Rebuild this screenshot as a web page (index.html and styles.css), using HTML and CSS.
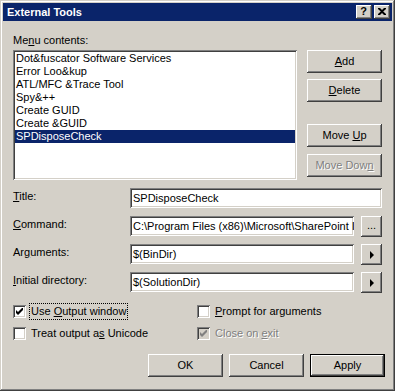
FILE: index.html
```html
<!DOCTYPE html>
<html>
<head>
<meta charset="utf-8">
<link rel="stylesheet" href="styles.css">
</head>
<body>
<div class="window">
  <div class="titlebar">
    <span class="title">External Tools</span>
    <div class="tb-buttons">
      <span class="tb-btn help">?</span>
      <span class="tb-btn close"><svg width="8" height="7" viewBox="0 0 8 7"><path d="M0 0h2l2 2 2-2h2v1L5.2 3.5 8 6v1H6L4 5 2 7H0V6l2.8-2.5L0 1z" fill="#000"/></svg></span>
    </div>
  </div>
  <div class="client">
    <div class="menu-label">Me<u>n</u>u contents:</div>
    <div class="top-row">
      <div class="listbox">
        <div class="item">Dot&amp;fuscator Software Services</div>
        <div class="item">Error Loo&amp;kup</div>
        <div class="item">ATL/MFC &amp;Trace Tool</div>
        <div class="item">Spy&amp;++</div>
        <div class="item">Create GUID</div>
        <div class="item">Create &amp;GUID</div>
        <div class="item selected">SPDisposeCheck</div>
      </div>
      <div class="side-buttons">
        <button class="btn"><span><u>A</u>dd</span></button>
        <button class="btn"><span><u>D</u>elete</span></button>
        <button class="btn move-up"><span>Move <u>U</u>p</span></button>
        <button class="btn disabled"><span>Move Dow<u>n</u></span></button>
      </div>
    </div>
    <div class="fields">
      <div class="flabel"><u>T</u>itle:</div>
      <div class="edit span2"><span>SPDisposeCheck</span></div>
      <div class="flabel"><u>C</u>ommand:</div>
      <div class="edit"><span>C:\Program Files (x86)\Microsoft\SharePoint I</span></div>
      <button class="btn small dots"><span>...</span></button>
      <div class="flabel">Ar<u>g</u>uments:</div>
      <div class="edit"><span>$(BinDir)</span></div>
      <button class="btn small"><span class="arrow"></span></button>
      <div class="flabel"><u>I</u>nitial directory:</div>
      <div class="edit"><span>$(SolutionDir)</span></div>
      <button class="btn small"><span class="arrow"></span></button>
    </div>
    <div class="checks">
      <div class="check">
        <span class="cb"><svg width="7" height="7" viewBox="0 0 7 7"><path d="M0 2L2 4 6 0H7V2L2 7 0 5Z" fill="#000"/></svg></span>
        <span class="clabel focus">Use <u>O</u>utput window</span>
      </div>
      <div class="check">
        <span class="cb"></span>
        <span class="clabel"><u>P</u>rompt for arguments</span>
      </div>
      <div class="check">
        <span class="cb"></span>
        <span class="clabel">Treat output a<u>s</u> Unicode</span>
      </div>
      <div class="check disabled">
        <span class="cb"><svg width="7" height="7" viewBox="0 0 7 7"><path d="M0 2L2 4 6 0H7V2L2 7 0 5Z" fill="#808080"/></svg></span>
        <span class="clabel">Close on <u>e</u>xit</span>
      </div>
    </div>
    <div class="bottom-buttons">
      <button class="btn"><span>OK</span></button>
      <button class="btn"><span>Cancel</span></button>
      <button class="btn default"><span>Apply</span></button>
    </div>
  </div>
</div>
</body>
</html>
```

FILE: styles.css
```css
html, body {
  margin: 0;
  padding: 0;
  background: #d4d0c8;
}
body {
  font-family: "Liberation Sans", Arial, sans-serif;
  font-size: 11px;
  color: #000;
}
.window {
  width: 395px;
  height: 391px;
  box-sizing: border-box;
  background: #d4d0c8;
  padding: 3px;
  box-shadow: inset -1px -1px #404040, inset 1px 1px #d4d0c8, inset -2px -2px #808080, inset 2px 2px #fff;
  display: flex;
  flex-direction: column;
}
.titlebar {
  height: 18px;
  background: #0a246a;
  color: #fff;
  display: flex;
  align-items: center;
  justify-content: space-between;
  padding: 0 2px;
}
.title {
  font-weight: bold;
  padding-left: 2px;
  line-height: 13px;
}
.tb-buttons {
  display: flex;
  gap: 2px;
}
.tb-btn {
  width: 16px;
  height: 14px;
  box-sizing: border-box;
  background: #d4d0c8;
  color: #000;
  box-shadow: inset -1px -1px #404040, inset 1px 1px #fff, inset -2px -2px #808080, inset 2px 2px #d4d0c8;
  display: flex;
  align-items: center;
  justify-content: center;
  font-weight: bold;
  font-size: 11px;
  line-height: 11px;
}
.tb-btn.help {
  padding: 0 1px 1px 0;
}
.tb-btn.close svg {
  margin: 0 1px 1px 0;
}
.client {
  flex: 1;
  padding: 0 10px 0 10px;
  display: flex;
  flex-direction: column;
}
.menu-label {
  margin-top: 13px;
  line-height: 13px;
}
.top-row {
  margin-top: 3px;
  display: flex;
  gap: 10px;
}
.listbox {
  width: 284px;
  height: 130px;
  box-sizing: border-box;
  background: #fff;
  padding: 2px;
  box-shadow: inset 1px 1px #808080, inset -1px -1px #fff, inset 2px 2px #404040, inset -2px -2px #d4d0c8;
}
.item {
  height: 13px;
  line-height: 13px;
  padding-left: 1px;
  white-space: nowrap;
}
.item.selected {
  background: #0a246a;
  color: #fff;
}
.side-buttons {
  display: flex;
  flex-direction: column;
  width: 75px;
}
.btn {
  border: none;
  margin: 0;
  padding: 0;
  font: inherit;
  color: #000;
  background: #d4d0c8;
  width: 75px;
  height: 23px;
  box-sizing: border-box;
  box-shadow: inset -1px -1px #404040, inset 1px 1px #fff, inset -2px -2px #808080, inset 2px 2px #d4d0c8;
  display: flex;
  align-items: center;
  justify-content: center;
  line-height: 13px;
  white-space: nowrap;
}
.side-buttons .btn + .btn {
  margin-top: 6px;
}
.side-buttons .btn.move-up {
  margin-top: 22px;
}
.side-buttons .btn.disabled {
  margin-top: 7px;
}
.btn.disabled, .check.disabled .clabel {
  color: #808080;
  text-shadow: 1px 1px #fff;
}
.btn.default {
  box-shadow: inset 0 0 0 1px #000, inset -2px -2px #404040, inset 2px 2px #fff, inset -3px -3px #808080, inset 3px 3px #d4d0c8;
}
.fields {
  margin-top: 8px;
  display: grid;
  grid-template-columns: 110px 1fr 21px;
  grid-auto-rows: 20px;
  column-gap: 7px;
  row-gap: 8px;
}
.flabel {
  padding-top: 2px;
  line-height: 13px;
  white-space: nowrap;
}
.edit {
  background: #fff;
  box-sizing: border-box;
  height: 20px;
  padding: 0 3px;
  box-shadow: inset 1px 1px #808080, inset -1px -1px #fff, inset 2px 2px #404040, inset -2px -2px #d4d0c8;
  display: flex;
  align-items: center;
  white-space: nowrap;
  overflow: hidden;
  line-height: 13px;
}
.edit.span2 {
  grid-column: 2 / 4;
}
.btn.small {
  width: 21px;
  height: 21px;
}
.btn.dots {
  align-items: flex-end;
  padding-bottom: 5px;
}
.arrow {
  width: 0;
  height: 0;
  border-left: 4px solid #000;
  border-top: 4px solid transparent;
  border-bottom: 4px solid transparent;
  margin-left: 1px;
}
.checks {
  margin-top: 13px;
  display: grid;
  grid-template-columns: 184px 1fr;
  row-gap: 9px;
}
.check {
  display: flex;
  align-items: center;
  gap: 5px;
  height: 13px;
}
.cb {
  width: 13px;
  height: 13px;
  flex: none;
  box-sizing: border-box;
  background: #fff;
  box-shadow: inset 1px 1px #808080, inset -1px -1px #fff, inset 2px 2px #404040, inset -2px -2px #d4d0c8;
  display: flex;
  align-items: center;
  justify-content: center;
}
.check.disabled .cb {
  background: #d4d0c8;
}
.clabel {
  line-height: 13px;
  white-space: nowrap;
}
.clabel.focus {
  outline: 1px dotted #000;
  outline-offset: 1px;
}
.bottom-buttons {
  margin-top: 14px;
  margin-right: -3px;
  display: flex;
  justify-content: flex-end;
  gap: 6px;
}
```
